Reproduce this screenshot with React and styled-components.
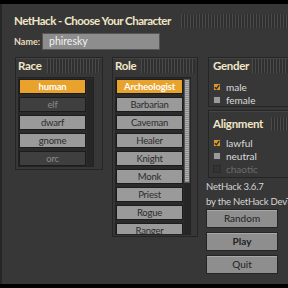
import React from "react";
import styled, { createGlobalStyle } from "styled-components";

const Global = createGlobalStyle`
  html, body { margin: 0; padding: 0; background: #000; overflow: hidden; }
  body { font-family: "Lato", "Open Sans", sans-serif; }
  * { box-sizing: border-box; }
`;

const Window = styled.div`
  margin-top: 4px;
  width: 320px;
  height: 280px;
  background: #373737;
  border-left: 2px solid #262626;
  padding: 10px 0 0 12px;
`;

const TitleRow = styled.div`
  display: flex;
  align-items: center;
  height: 14px;
`;

const Title = styled.div`
  font-weight: 700;
  font-size: 11.5px;
  letter-spacing: -0.5px;
  color: #f1e6c6;
  white-space: nowrap;
  line-height: 14px;
`;

const Stripes = styled.div`
  flex: 1;
  height: 14px;
  margin-left: ${(p) => p.$gap || 6}px;
  background: repeating-linear-gradient(90deg, #4a4a4a 0 1px, #303030 1px 3px);
`;

const NameRow = styled.div`
  display: flex;
  align-items: center;
  margin-top: 5px;
  height: 17px;
`;

const NameLabel = styled.div`
  width: 28px;
  font-size: 9px;
  font-weight: 700;
  color: #e8ddc0;
`;

const NameInput = styled.div`
  width: 118px;
  height: 17px;
  background: #8d8d8d;
  border: 1px solid #555;
  color: #f2f2f2;
  font-size: 10.5px;
  line-height: 15px;
  padding-left: 6px;
`;

const PanelsRow = styled.div`
  display: flex;
  align-items: flex-start;
  margin-top: 7px;
`;

const Panel = styled.div`
  width: ${(p) => p.$w}px;
  height: ${(p) => p.$h}px;
  margin-left: ${(p) => p.$ml || 0}px;
  margin-top: ${(p) => p.$mt || 0}px;
  border: 1px solid #252525;
  box-shadow: inset 0 1px 0 #454545;
  padding: ${(p) => p.$pt || 1}px 2px 0 ${(p) => p.$pl || 2}px;
  overflow: hidden;
`;

const Header = styled.div`
  display: flex;
  align-items: center;
  height: 14px;
`;

const HeaderText = styled.div`
  font-weight: 700;
  font-size: 11.5px;
  letter-spacing: -0.3px;
  color: #f1e6c6;
  white-space: nowrap;
  line-height: 14px;
`;

const ListFrame = styled.div`
  display: flex;
  gap: 1px;
  width: 76px;
  height: ${(p) => p.$h}px;
  margin-top: 4px;
  background: #2b2b2b;
  border: 1px solid #232323;
  padding: 1px 0 0 0;
  overflow: hidden;
`;

const Items = styled.div`
  width: 68px;
  display: flex;
  flex-direction: column;
  gap: 3px;
`;

const Item = styled.div`
  flex: none;
  height: 15px;
  border: 1px solid #1c1c1c;
  background: ${(p) => (p.$sel ? "#e9a22b" : p.$dis ? "#3f3f3f" : "#9a9a9a")};
  color: ${(p) => (p.$sel ? "#fff" : p.$dis ? "#8a8a8a" : "#2c2c2c")};
  font-weight: ${(p) => (p.$sel ? 700 : 400)};
  font-size: 9.5px;
  letter-spacing: -0.2px;
  line-height: 13px;
  text-align: center;
`;

const ScrollTrack = styled.div`
  width: 6px;
  background: #262626;
  display: flex;
  flex-direction: column;
`;

const Thumb = styled.div`
  height: ${(p) => p.$h}px;
  border: 1px solid #555;
  background: repeating-linear-gradient(0deg, #8c8c8c 0 1px, #b0b0b0 1px 2px);
`;

const RightCol = styled.div`
  margin-left: 8px;
  width: 100px;
  display: flex;
  flex-direction: column;
`;

const Check = styled.div`
  display: flex;
  align-items: center;
  height: 13px;
  gap: 5px;
  margin-top: ${(p) => p.$mt || 0}px;
  color: ${(p) => (p.$dis ? "#6c6c6c" : "#dcdcdc")};
  font-size: 10px;
`;

const Box = styled.div`
  width: 8px;
  height: 8px;
  border: 1px solid ${(p) => (p.$dis ? "#2a2a2a" : "#3a3a3a")};
  background: ${(p) => (p.$on ? "#d9962b" : p.$dis ? "#333" : "#9a9a9a")};
  display: flex;
  align-items: center;
  justify-content: center;
`;

const Info = styled.div`
  margin-top: 1px;
  font-size: 9.5px;
  letter-spacing: -0.2px;
  line-height: 15px;
  color: #d6d6d6;
  white-space: nowrap;
`;

const Buttons = styled.div`
  display: flex;
  flex-direction: column;
  gap: 4px;
  width: 72px;
`;

const Button = styled.div`
  height: 19px;
  background: #8e8e8e;
  border: 1px solid #252525;
  box-shadow: inset 0 1px 0 #a8a8a8;
  color: #222;
  font-size: 10px;
  font-weight: ${(p) => (p.$bold ? 700 : 400)};
  line-height: 17px;
  text-align: center;
`;

const Tick = () => (
  <svg width="6" height="6" viewBox="0 0 6 6">
    <path d="M0.8 3.2 L2.4 4.8 L5.3 1" stroke="#2a2a2a" strokeWidth="1.3" fill="none" />
  </svg>
);

const races = [
  ["human", "sel"],
  ["elf", "dis"],
  ["dwarf"],
  ["gnome"],
  ["orc", "dis"],
];
const roles = ["Archeologist", "Barbarian", "Caveman", "Healer", "Knight", "Monk", "Priest", "Rogue", "Ranger", "Samurai"];

export default function App() {
  return (
    <>
      <Global />
      <Window>
        <TitleRow>
          <Title>NetHack - Choose Your Character</Title>
          <Stripes $gap={10} />
        </TitleRow>
        <NameRow>
          <NameLabel>Name:</NameLabel>
          <NameInput>phiresky</NameInput>
        </NameRow>
        <PanelsRow>
          <Panel $w={88} $h={113} $ml={1}>
            <Header>
              <HeaderText>Race</HeaderText>
              <Stripes $gap={5} />
            </Header>
            <ListFrame $h={90}>
              <Items>
                {races.map(([r, s]) => (
                  <Item key={r} $sel={s === "sel"} $dis={s === "dis"}>{r}</Item>
                ))}
              </Items>
              <ScrollTrack />
            </ListFrame>
          </Panel>
          <Panel $w={86} $h={180} $ml={9}>
            <Header>
              <HeaderText>Role</HeaderText>
              <Stripes $gap={5} />
            </Header>
            <ListFrame $h={158}>
              <Items>
                {roles.map((r, i) => (
                  <Item key={r} $sel={i === 0}>{r}</Item>
                ))}
              </Items>
              <ScrollTrack>
                <Thumb $h={104} />
              </ScrollTrack>
            </ListFrame>
          </Panel>
          <RightCol>
            <Panel $w={100} $h={50} $ml={2} $pl={4}>
              <Header>
                <HeaderText>Gender</HeaderText>
                <Stripes $gap={3} />
              </Header>
              <Check $mt={7}><Box $on><Tick /></Box>male</Check>
              <Check><Box />female</Check>
            </Panel>
            <Panel $w={100} $h={68} $ml={2} $mt={3} $pl={4} $pt={6}>
              <Header>
                <HeaderText>Alignment</HeaderText>
                <Stripes $gap={8} />
              </Header>
              <Check $mt={5}><Box $on><Tick /></Box>lawful</Check>
              <Check><Box />neutral</Check>
              <Check $dis><Box $dis />chaotic</Check>
            </Panel>
            <Info>NetHack 3.6.7<br />by the NetHack DevTeam</Info>
            <Buttons>
              <Button>Random</Button>
              <Button $bold>Play</Button>
              <Button>Quit</Button>
            </Buttons>
          </RightCol>
        </PanelsRow>
      </Window>
    </>
  );
}
